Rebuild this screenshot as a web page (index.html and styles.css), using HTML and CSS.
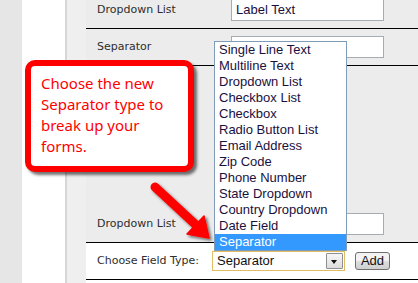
FILE: index.html
```html
<!DOCTYPE html>
<html lang="en">
<head>
  <meta charset="UTF-8">
  <title>Form Fields</title>
  <link rel="stylesheet" href="styles.css">
</head>
<body>
  <div class="page">
    <div class="sidebar-outer"></div>
    <div class="sidebar-inner"></div>
    <div class="sidebar-band"></div>

    <div class="field-table">
      <div class="field-row">
        <span class="field-label">Dropdown List</span>
        <span class="text-input">Label Text</span>
      </div>
      <div class="field-row">
        <span class="field-label">Separator</span>
        <span class="text-input"></span>
      </div>
      <div class="field-row tall"></div>
      <div class="field-row">
        <span class="field-label">Dropdown List</span>
        <span class="text-input"></span>
      </div>
      <div class="field-row add-row">
        <span class="choose-label">Choose Field Type:</span>
        <div class="select-box">
          <span>Separator</span>
          <span class="select-arrow"></span>
        </div>
        <button class="add-button">Add</button>
      </div>
    </div>
  </div>

  <!-- open dropdown -->
  <ul class="dropdown-list">
    <li>Single Line Text</li>
    <li>Multiline Text</li>
    <li>Dropdown List</li>
    <li>Checkbox List</li>
    <li>Checkbox</li>
    <li>Radio Button List</li>
    <li>Email Address</li>
    <li>Zip Code</li>
    <li>Phone Number</li>
    <li>State Dropdown</li>
    <li>Country Dropdown</li>
    <li>Date Field</li>
    <li class="selected">Separator</li>
  </ul>

  <!-- annotation -->
  <div class="callout">Choose the new Separator type to break up your forms.</div>
  <svg class="callout-arrow" width="418" height="283" viewBox="0 0 418 283">
    <defs>
      <filter id="arrowShadow" x="-20%" y="-20%" width="150%" height="150%">
        <feDropShadow dx="2" dy="2" stdDeviation="1.5" flood-color="#000" flood-opacity="0.55"/>
      </filter>
    </defs>
    <g filter="url(#arrowShadow)" fill="#ff0000" stroke="#ff0000">
      <line x1="155" y1="187" x2="196" y2="225" stroke-width="9" stroke-linecap="round"/>
      <polygon points="204,216 187,234 209,238" stroke-width="1.5" stroke-linejoin="round"/>
    </g>
  </svg>
</body>
</html>
```

FILE: styles.css
```css
* {
  margin: 0;
  padding: 0;
  box-sizing: border-box;
}

body {
  background-color: #ffffff;
  font-family: "DejaVu Sans", Verdana, sans-serif;
  overflow: hidden;
}

.page {
  display: flex;
  height: 283px;
}

.sidebar-outer {
  width: 22px;
  background-color: #e6e6e6;
}

.sidebar-inner {
  width: 45px;
  background-color: #ffffff;
  border-right: 2px solid #d6d6d6;
}

.sidebar-band {
  width: 19px;
  background-color: #efefef;
}

.field-table {
  flex: 1;
  margin-top: -8px;
}

.field-row {
  display: flex;
  align-items: flex-start;
  height: 37px;
  padding: 7px 0 0 11px;
  background-color: #ececec;
  border-bottom: 1px solid #000000;
  font-size: 11px;
  color: #2e2e2e;
}

.field-row.tall {
  height: 140px;
  border-bottom: none;
}

.field-label {
  width: 134px;
  line-height: 21px;
}

.text-input {
  width: 153px;
  height: 22px;
  padding: 0 4px;
  background-color: #ffffff;
  border: 1px solid #a5acb2;
  font-family: "Liberation Sans", Arial, sans-serif;
  font-size: 13px;
  line-height: 20px;
  color: #1a1040;
}

.add-row {
  background-color: #ffffff;
  padding-top: 8px;
}

.choose-label {
  width: 115px;
  line-height: 20px;
}

.select-box {
  display: flex;
  justify-content: space-between;
  width: 133px;
  height: 20px;
  padding: 1px 1px 1px 4px;
  border: 1px solid #e0bd65;
  background-color: #ffffff;
  font-family: "Liberation Sans", Arial, sans-serif;
  font-size: 13px;
  line-height: 16px;
  color: #111111;
}

.select-arrow {
  position: relative;
  width: 17px;
  height: 16px;
  border: 1px solid #8f8f8f;
  border-radius: 1px;
  background: linear-gradient(#f7f7f7, #dcdcdc);
}

.select-arrow:before {
  position: absolute;
  content: "";
  left: 4px;
  top: 6px;
  border-left: 3.5px solid transparent;
  border-right: 3.5px solid transparent;
  border-top: 4px solid #111111;
}

.add-button {
  margin: 1px 0 0 10px;
  width: 35px;
  height: 18px;
  border: 1px solid #707070;
  border-radius: 3px;
  background: linear-gradient(#f3f3f3 45%, #dcdcdc 55%, #d0d0d0);
  font-family: "Liberation Sans", Arial, sans-serif;
  font-size: 13px;
  line-height: 16px;
  color: #111111;
}

/* Open list of the field type dropdown */
.dropdown-list {
  position: absolute;
  left: 214px;
  top: 41px;
  width: 133px;
  list-style: none;
  background-color: #ffffff;
  border: 1px solid #7f9db9;
  font-family: "Liberation Sans", Arial, sans-serif;
  font-size: 13px;
  line-height: 16px;
  color: #1a1040;
}

.dropdown-list li {
  height: 16px;
  padding-left: 4px;
  white-space: nowrap;
}

.dropdown-list li.selected {
  background-color: #3399ff;
  color: #ffffff;
}

/* Red annotation box */
.callout {
  position: absolute;
  left: 25px;
  top: 60px;
  width: 169px;
  height: 112px;
  padding: 7px 4px 0 10px;
  background-color: #ffffff;
  border: 6px solid #ff0000;
  border-radius: 10px;
  box-shadow: 3px 3px 3px rgba(0, 0, 0, 0.55);
  font-family: "Noto Sans", "Open Sans", sans-serif;
  font-size: 15px;
  line-height: 21px;
  color: #ff0000;
}

.callout-arrow {
  position: absolute;
  left: 0;
  top: 0;
  pointer-events: none;
}
```
